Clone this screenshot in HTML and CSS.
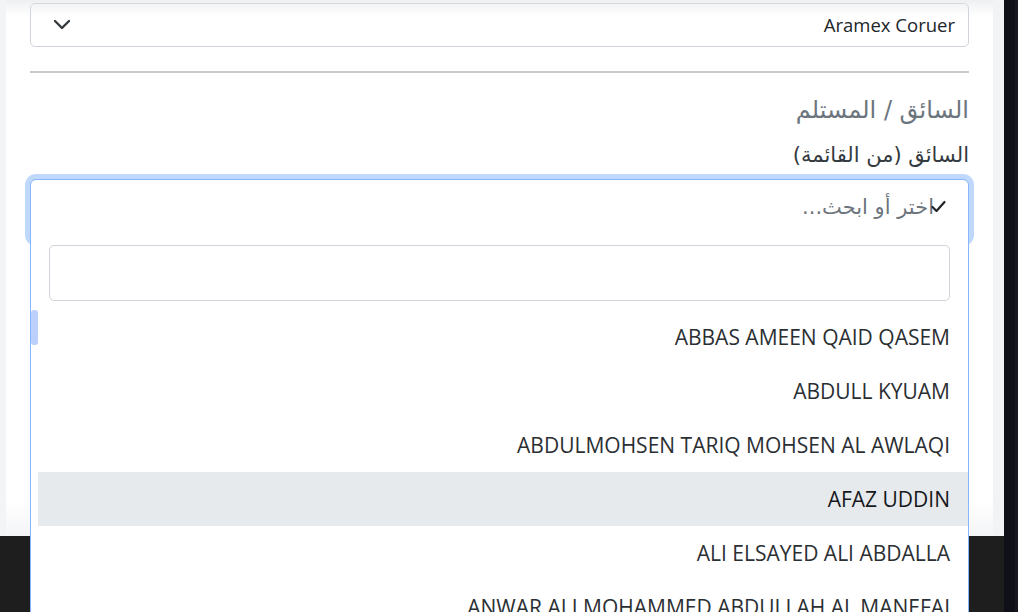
FILE: index.html
```html
<!DOCTYPE html>
<html lang="ar">
<head>
<meta charset="utf-8">
<title>Driver select</title>
<link rel="stylesheet" href="styles.css">
</head>
<body>
<div class="screen">
  <div class="page">
    <div class="main">
      <div class="card" dir="rtl">
        <div class="top-shade"></div>
        <div class="select">
          <span class="select-value">Aramex Coruer</span>
          <svg class="chev" width="18" height="12" viewBox="0 0 18 12"><path d="M2 2l7 7 7-7" fill="none" stroke="#343a40" stroke-width="2.4" stroke-linecap="round" stroke-linejoin="round"/></svg>
        </div>
        <div class="rule"></div>
        <h3 class="section-title">السائق / المستلم</h3>
        <label class="field-label">السائق (من القائمة)</label>
        <div class="combo">
          <div class="combo-control"></div>
          <div class="combo-panel">
            <div class="combo-head">
              <svg class="check" width="15" height="13" viewBox="0 0 15 13"><path d="M1.5 7l4 4 8-9" fill="none" stroke="#212529" stroke-width="2.2" stroke-linecap="round" stroke-linejoin="round"/></svg>
              <span class="placeholder">اختر أو ابحث...</span>
            </div>
            <div class="search-wrap"><div class="search"></div></div>
            <div class="list">
              <div class="thumb"></div>
              <div class="item">ABBAS AMEEN QAID QASEM</div>
              <div class="item">ABDULL KYUAM</div>
              <div class="item">ABDULMOHSEN TARIQ MOHSEN AL AWLAQI</div>
              <div class="item active">AFAZ UDDIN</div>
              <div class="item">ALI ELSAYED ALI ABDALLA</div>
              <div class="item">ANWAR ALI MOHAMMED ABDULLAH AL MANEFAI</div>
            </div>
          </div>
        </div>
      </div>
      <div class="gutter"></div>
    </div>
    <div class="footer-bar"></div>
  </div>
  <div class="side">
    <div class="side-dark"></div>
    <div class="side-edge"></div>
  </div>
</div>
</body>
</html>
```
FILE: styles.css
```css
html, body {
  margin: 0;
  padding: 0;
  height: 100%;
  overflow: hidden;
  font-family: "Open Sans", "DejaVu Sans", sans-serif;
  color: #212529;
}

.screen {
  display: flex;
  height: 612px;
  width: 1018px;
  overflow: hidden;
}

.page {
  width: 1004px;
  display: flex;
  flex-direction: column;
  background: #f3f4f6;
  position: relative;
}

.main {
  display: flex;
  height: 536px;
  padding-left: 6px;
}

.gutter {
  width: 11px;
  background: #f2f3f5;
}

.side {
  display: flex;
  width: 14px;
}
.side-dark { width: 11px; background: #0f1018; }
.side-edge { width: 3px; background: #17181f; }

.card {
  position: relative;
  height: 536px;
  width: 987px;
  box-sizing: border-box;
  background: linear-gradient(to bottom, #fff 0, #fff 500px, #f4f5f7 536px);
  padding: 3px 24px 0 24px;
}

.top-shade {
  position: absolute;
  left: 0;
  right: 0;
  top: 0;
  height: 16px;
  background: linear-gradient(to bottom, rgba(225,227,231,0.55), rgba(255,255,255,0));
  pointer-events: none;
  z-index: 3;
}

.footer-bar {
  flex: 1;
  background: #1e1e1e;
}

.select {
  height: 44px;
  box-sizing: border-box;
  border: 1px solid #ced4da;
  border-radius: 5px;
  display: flex;
  align-items: center;
  justify-content: space-between;
  padding: 0 13px 2px 22px;
  background: #fff;
}
.select-value {
  font-size: 18.5px;
  color: #212529;
}
.chev { display: block; margin-top: 1px; }

.rule {
  height: 2px;
  background: #c9c9c9;
  margin-top: 24px;
}

.section-title {
  margin: 21px 0 0 0;
  font-weight: normal;
  font-size: 24px;
  line-height: 32px;
  color: #6c757d;
  font-family: "DejaVu Sans", sans-serif;
}

.field-label {
  display: block;
  margin-top: 15px;
  font-size: 21px;
  line-height: 28px;
  color: #343a40;
  font-family: "DejaVu Sans", sans-serif;
}

.combo {
  position: relative;
  margin-top: 10px;
  height: 62px;
}
.combo-control {
  height: 62px;
  box-sizing: border-box;
  border: 1px solid #86b7fe;
  border-radius: 6px;
  box-shadow: 0 0 0 5px #c0d8fc;
}
.combo-panel {
  position: absolute;
  top: 0;
  left: 0;
  right: 0;
  height: 470px;
  background: #fff;
  border: 1px solid #86b7fe;
  border-radius: 6px 6px 0 0;
  z-index: 2;
  box-sizing: border-box;
}
.combo-head {
  height: 65px;
  display: flex;
  align-items: center;
  padding-right: 22px;
  padding-bottom: 12px;
  box-sizing: border-box;
  position: relative;
}
.placeholder {
  font-family: "DejaVu Sans", sans-serif;
  font-size: 21px;
  color: #6c757d;
  margin-right: -3px;
}
.check { display: block; position: relative; z-index: 1; }

.search-wrap {
  padding: 0 18px 0 18px;
}
.search {
  height: 56px;
  box-sizing: border-box;
  border: 1px solid #ced4da;
  border-radius: 5px;
}

.list {
  position: relative;
  margin-top: 9px;
  margin-left: 7px;
}
.thumb {
  position: absolute;
  left: -7px;
  top: 0;
  width: 7px;
  height: 35px;
  border-radius: 3px;
  background: #bcd0fb;
}
.item {
  height: 54px;
  display: flex;
  align-items: center;
  padding-right: 18px;
  font-size: 21px;
  color: #2b2f33;
  white-space: nowrap;
  overflow: hidden;
}
.item.active {
  background: #e7eaed;
  color: #16181b;
}
```
